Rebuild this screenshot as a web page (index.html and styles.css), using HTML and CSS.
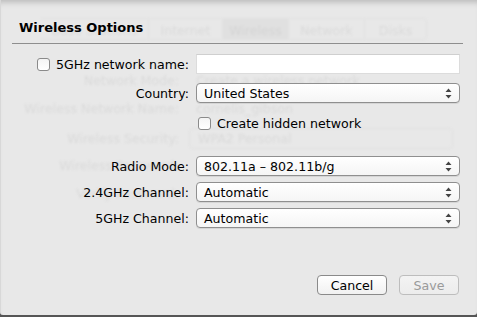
FILE: index.html
```html
<!DOCTYPE html>
<html lang="en">
<head>
  <meta charset="UTF-8" />
  <title>Wireless Options</title>
  <link rel="stylesheet" href="styles.css">
</head>
<body>

<div class="sheet">
  <!-- faded window behind the sheet -->
  <div class="ghost">
    <div class="ghost-tabs">
      <span class="t0">Base Stations</span>
      <span class="t1">Internet</span>
      <span class="t2 sel">Wireless</span>
      <span class="t3">Network</span>
      <span class="t4">Disks</span>
    </div>
    <div class="ghost-row r1"><span class="gl">Network Mode:</span><span class="gv">Create a wireless network</span></div>
    <div class="ghost-row r2"><span class="gl">Wireless Network Name:</span><span class="gv">cornelis_gibson</span></div>
    <div class="ghost-row r3"><span class="gl">Wireless Security:</span><span class="gv box">WPA2 Personal</span></div>
    <div class="ghost-row r4"><span class="gl">Wireless Password:</span></div>
    <div class="ghost-row r5"><span class="gl">Verify Password:</span></div>
  </div>

  <h1 class="title">Wireless Options</h1>
  <div class="rule"></div>

  <div class="form">
    <label class="lbl"><span class="check"></span>5GHz network name:</label>
    <div class="field"><div class="input"></div></div>

    <label class="lbl">Country:</label>
    <div class="field"><div class="select">United States<svg class="arrows" viewBox="0 0 7 11"><path d="M3.5 0.5 L6.5 4 H0.5 Z M3.5 10.5 L6.5 7 H0.5 Z"/></svg></div></div>

    <span class="spacer"></span>
    <div class="field hidden-net"><span class="check"></span>Create hidden network</div>

    <label class="lbl gap-top">Radio Mode:</label>
    <div class="field gap-top"><div class="select">802.11a – 802.11b/g<svg class="arrows" viewBox="0 0 7 11"><path d="M3.5 0.5 L6.5 4 H0.5 Z M3.5 10.5 L6.5 7 H0.5 Z"/></svg></div></div>

    <label class="lbl">2.4GHz Channel:</label>
    <div class="field"><div class="select">Automatic<svg class="arrows" viewBox="0 0 7 11"><path d="M3.5 0.5 L6.5 4 H0.5 Z M3.5 10.5 L6.5 7 H0.5 Z"/></svg></div></div>

    <label class="lbl">5GHz Channel:</label>
    <div class="field"><div class="select">Automatic<svg class="arrows" viewBox="0 0 7 11"><path d="M3.5 0.5 L6.5 4 H0.5 Z M3.5 10.5 L6.5 7 H0.5 Z"/></svg></div></div>
  </div>

  <div class="buttons">
    <button class="btn">Cancel</button>
    <button class="btn disabled">Save</button>
  </div>
</div>

</body>
</html>
```

FILE: styles.css
```css
* { box-sizing: border-box; }
body {
  margin: 0;
  font-family: 'DejaVu Sans', sans-serif;
  font-size: 12.6px;
  color: #000;
  background: #555;
  width: 477px;
  height: 317px;
  overflow: hidden;
}
.sheet {
  position: relative;
  height: 315px;
  background: #e8e8e8;
  border-left: 1px solid #d8d8d8;
  border-radius: 0 0 3px 3px;
  padding-top: 19px;
  box-shadow: inset 0 7px 6px -5px rgba(0,0,0,0.22);
}
.ghost {
  position: absolute;
  inset: 0;
  color: #dadada;
  font-size: 12.6px;
  filter: blur(0.8px);
  pointer-events: none;
}
.ghost-tabs {
  position: absolute;
  top: 18px;
  left: 40px;
  display: flex;
  height: 22px;
}
.ghost-tabs span {
  padding-top: 4px;
  text-align: center;
  border: 1px solid #e1e1e1;
  border-left: none;
}
.ghost-tabs .t0 { width: 108px; }
.ghost-tabs .t1 { width: 74px; }
.ghost-tabs .t2 { width: 66px; }
.ghost-tabs .t3 { width: 76px; }
.ghost-tabs .t4 { width: 62px; border-radius: 0 4px 4px 0; }
.ghost-tabs .sel { background: #e0e0e0; color: #d4d4d4; }
.ghost-row {
  position: absolute;
  left: 0;
  display: flex;
  align-items: center;
}
.ghost-row .gl { width: 178px; text-align: right; }
.ghost-row .gv { margin-left: 17px; }
.ghost-row .box {
  border: 1px solid #e1e1e1;
  border-radius: 4px;
  padding: 2px 8px;
  width: 264px;
  margin-left: 10px;
}
.r1 { top: 73px; }
.r2 { top: 101px; }
.r3 { top: 128px; }
.r4 { top: 158px; }
.r5 { top: 186px; }
.title {
  position: relative;
  margin: 0 0 0 18px;
  font-size: 13px;
  font-weight: bold;
  line-height: 18px;
}
.rule {
  position: relative;
  height: 1px;
  background: #8e8e8e;
  margin: 6px 14px 0 11px;
}
.form {
  position: relative;
  display: grid;
  grid-template-columns: 188px 264px;
  column-gap: 7px;
  row-gap: 6px;
  margin-top: 10px;
}
.lbl {
  display: flex;
  align-items: center;
  justify-content: flex-end;
  height: 20px;
  white-space: nowrap;
}
.field { height: 20px; }
.form > :nth-child(3), .form > :nth-child(4) { margin-top: 3px; }
.spacer, .hidden-net { margin-top: 4px; }
.gap-top { margin-top: 17px; }
.input {
  height: 20px;
  background: #fff;
  border: 1px solid #dcdcdc;
  border-top-color: #cfcfcf;
}
.check {
  display: inline-block;
  width: 13px;
  height: 13px;
  border: 1px solid #8a8a8a;
  border-radius: 3px;
  background: linear-gradient(#f4f4f4, #fff);
  margin-right: 6px;
}
.hidden-net {
  display: flex;
  align-items: center;
  padding-left: 2px;
}
.select {
  position: relative;
  display: flex;
  align-items: center;
  height: 20px;
  padding-left: 7px;
  background: linear-gradient(#fff, #f5f5f5);
  border: 1px solid #8f8f8f;
  border-radius: 4px;
  box-shadow: 0 1px 0 rgba(0,0,0,0.08);
}
.arrows {
  position: absolute;
  right: 7px;
  top: 4px;
  width: 7px;
  height: 11px;
  fill: #444;
}
.buttons {
  position: relative;
  display: flex;
  justify-content: flex-end;
  gap: 12px;
  margin: 47px 18px 0 0;
}
.btn {
  font-family: inherit;
  font-size: 12.6px;
  height: 20px;
  padding: 0;
  background: linear-gradient(#fff, #f1f1f1);
  border: 1px solid #8a8a8a;
  border-radius: 4px;
  color: #000;
  width: 70px;
}
.btn.disabled {
  width: 60px;
  color: #9a9a9a;
  border-color: #bdbdbd;
  background: linear-gradient(#f3f3f3, #ececec);
}
```
